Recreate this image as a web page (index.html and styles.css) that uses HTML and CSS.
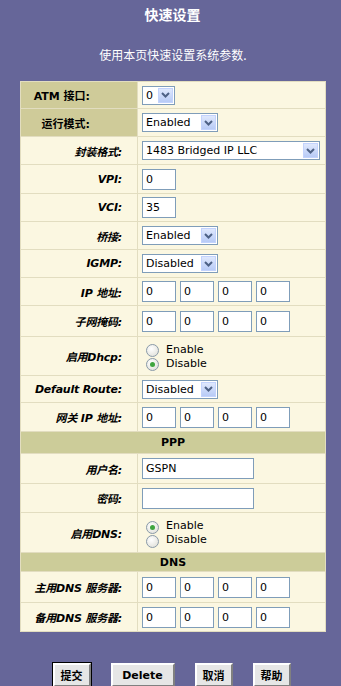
FILE: index.html
```html
<!DOCTYPE html>
<html lang="zh-CN">
<head>
    <meta charset="UTF-8">
    <meta name="viewport" content="width=device-width, initial-scale=1.0">
    <title>快速设置</title>
    <link rel="stylesheet" href="styles.css">
</head>
<body>
    <h1 class="title">快速设置</h1>
    <p class="intro">使用本页快速设置系统参数.</p>

    <table class="setup">
        <colgroup>
            <col class="col-label">
            <col class="col-value">
        </colgroup>
        <tr class="r27">
            <td class="label top">ATM 接口:</td>
            <td><span class="sel w32"><span class="val">0</span><span class="arrow"><svg width="9" height="6" viewBox="0 0 9 6"><path d="M1 1l3.5 3.5L8 1" fill="none" stroke="#4d6185" stroke-width="2"/></svg></span></span></td>
        </tr>
        <tr class="r28">
            <td class="label top">运行模式:</td>
            <td><span class="sel w75"><span class="val">Enabled</span><span class="arrow"><svg width="9" height="6" viewBox="0 0 9 6"><path d="M1 1l3.5 3.5L8 1" fill="none" stroke="#4d6185" stroke-width="2"/></svg></span></span></td>
        </tr>
        <tr class="r28">
            <td class="label">封装格式:</td>
            <td><span class="sel w177"><span class="val">1483 Bridged IP LLC</span><span class="arrow"><svg width="9" height="6" viewBox="0 0 9 6"><path d="M1 1l3.5 3.5L8 1" fill="none" stroke="#4d6185" stroke-width="2"/></svg></span></span></td>
        </tr>
        <tr class="r29">
            <td class="label">VPI:</td>
            <td><input class="box" type="text" value="0"></td>
        </tr>
        <tr class="r28">
            <td class="label">VCI:</td>
            <td><input class="box" type="text" value="35"></td>
        </tr>
        <tr class="r28">
            <td class="label">桥接:</td>
            <td><span class="sel w75"><span class="val">Enabled</span><span class="arrow"><svg width="9" height="6" viewBox="0 0 9 6"><path d="M1 1l3.5 3.5L8 1" fill="none" stroke="#4d6185" stroke-width="2"/></svg></span></span></td>
        </tr>
        <tr class="r28">
            <td class="label">IGMP:</td>
            <td><span class="sel w75"><span class="val">Disabled</span><span class="arrow"><svg width="9" height="6" viewBox="0 0 9 6"><path d="M1 1l3.5 3.5L8 1" fill="none" stroke="#4d6185" stroke-width="2"/></svg></span></span></td>
        </tr>
        <tr class="r28">
            <td class="label">IP 地址:</td>
            <td><div class="ip"><input class="box" value="0"><input class="box" value="0"><input class="box" value="0"><input class="box" value="0"></div></td>
        </tr>
        <tr class="r31">
            <td class="label">子网掩码:</td>
            <td><div class="ip"><input class="box" value="0"><input class="box" value="0"><input class="box" value="0"><input class="box" value="0"></div></td>
        </tr>
        <tr class="r39">
            <td class="label">启用Dhcp:</td>
            <td>
                <label class="radio"><span class="dot"></span>Enable</label>
                <label class="radio"><span class="dot on"></span>Disable</label>
            </td>
        </tr>
        <tr class="r27">
            <td class="label">Default Route:</td>
            <td><span class="sel w75"><span class="val">Disabled</span><span class="arrow"><svg width="9" height="6" viewBox="0 0 9 6"><path d="M1 1l3.5 3.5L8 1" fill="none" stroke="#4d6185" stroke-width="2"/></svg></span></span></td>
        </tr>
        <tr class="r29">
            <td class="label">网关 IP 地址:</td>
            <td><div class="ip"><input class="box" value="0"><input class="box" value="0"><input class="box" value="0"><input class="box" value="0"></div></td>
        </tr>
        <tr class="head r22">
            <td colspan="2">PPP</td>
        </tr>
        <tr class="r30">
            <td class="label">用户名:</td>
            <td><input class="box wide" type="text" value="GSPN"></td>
        </tr>
        <tr class="r29">
            <td class="label">密码:</td>
            <td><input class="box wide" type="password" value=""></td>
        </tr>
        <tr class="r40">
            <td class="label">启用DNS:</td>
            <td>
                <label class="radio"><span class="dot on"></span>Enable</label>
                <label class="radio"><span class="dot"></span>Disable</label>
            </td>
        </tr>
        <tr class="head r19">
            <td colspan="2">DNS</td>
        </tr>
        <tr class="r31">
            <td class="label">主用DNS 服务器:</td>
            <td><div class="ip"><input class="box" value="0"><input class="box" value="0"><input class="box" value="0"><input class="box" value="0"></div></td>
        </tr>
        <tr class="r29">
            <td class="label">备用DNS 服务器:</td>
            <td><div class="ip"><input class="box" value="0"><input class="box" value="0"><input class="box" value="0"><input class="box" value="0"></div></td>
        </tr>
    </table>

    <div class="buttons">
        <button class="btn default">提交</button>
        <button class="btn wide-btn">Delete</button>
        <button class="btn">取消</button>
        <button class="btn">帮助</button>
    </div>
</body>
</html>
```

FILE: styles.css
```css
body {
    margin: 0;
    background-color: #666699;
    font-family: "DejaVu Sans", "Noto Sans CJK SC", sans-serif;
    color: #000;
}
.title {
    margin: 0;
    padding-top: 4px;
    height: 22px;
    font-size: 14px;
    font-weight: bold;
    color: #fff;
    text-align: center;
    padding-left: 4px;
}
.intro {
    margin: 20px 0 0;
    height: 35px;
    font-family: "Noto Sans CJK SC", sans-serif;
    font-size: 12px;
    color: #fff;
    text-align: center;
    padding-left: 5px;
}
.setup {
    margin: 0 0 0 20px;
    width: 305px;
    table-layout: fixed;
    border-collapse: collapse;
    background-color: #fbf7e1;
    border: 1px solid #eeecdc;
}
.col-label {
    width: 117px;
}
.col-value {
    width: 188px;
}
.setup td {
    border: 1px solid #e2ddc0;
    padding: 0 0 0 4px;
    font-size: 11px;
    vertical-align: middle;
}
.setup td.label {
    padding: 0 15px 0 0;
    text-align: right;
    font-weight: bold;
    font-style: italic;
    white-space: nowrap;
    letter-spacing: -0.2px;
}
.setup td.label.top {
    background-color: #cfcb99;
    font-style: normal;
    letter-spacing: 0;
    padding-right: 47px;
}
.setup tr.head td {
    background-color: #cccc99;
    text-align: center;
    font-weight: bold;
    padding: 0;
}
.r19 { height: 19px; }
.r22 { height: 22px; }
.r27 { height: 27px; }
.r28 { height: 28px; }
.r29 { height: 29px; }
.r30 { height: 30px; }
.r31 { height: 31px; }
.r39 { height: 39px; }
.r40 { height: 40px; }

.sel {
    display: inline-flex;
    align-items: center;
    justify-content: space-between;
    height: 19px;
    box-sizing: border-box;
    border: 1px solid #7f9db9;
    background-color: #fff;
    font-family: "DejaVu Sans", sans-serif;
    font-size: 11px;
    padding: 1px 1px 1px 3px;
    vertical-align: middle;
}
.sel .arrow {
    display: flex;
    align-items: center;
    justify-content: center;
    width: 15px;
    height: 15px;
    background: linear-gradient(#dfe8fd, #b8cbf6);
    border: 1px solid #c3d3fd;
    box-sizing: border-box;
}
.w32 { width: 33px; }
.w75 { width: 76px; }
.w177 { width: 178px; }

.box {
    width: 34px;
    height: 21px;
    box-sizing: border-box;
    border: 1px solid #7f9db9;
    background-color: #fff;
    padding: 0 3px;
    margin: 0;
    font-family: "DejaVu Sans", sans-serif;
    font-size: 11px;
    vertical-align: middle;
}
.box.wide {
    width: 112px;
}
.ip {
    display: flex;
    gap: 4px;
}

.radio {
    display: flex;
    align-items: center;
    height: 14px;
    padding-left: 4px;
    font-family: "DejaVu Sans", sans-serif;
    font-size: 11px;
}
.dot {
    width: 11px;
    height: 11px;
    border: 1px solid #8a9aa8;
    border-radius: 50%;
    background: radial-gradient(circle at 40% 35%, #fff, #dcdcd4);
    margin-right: 7px;
    margin-top: 3px;
    position: relative;
    flex-shrink: 0;
}
.dot.on::after {
    content: "";
    position: absolute;
    left: 3px;
    top: 3px;
    width: 5px;
    height: 5px;
    border-radius: 50%;
    background-color: #3fa53f;
}

.buttons {
    display: flex;
    justify-content: center;
    gap: 20px;
    margin-top: 31px;
    padding-left: 2px;
}
.btn {
    height: 24px;
    min-width: 38px;
    padding: 0 6px;
    background-color: #e6e6e6;
    border: 2px solid;
    border-color: #fff #808080 #808080 #fff;
    font-family: "DejaVu Sans", "Noto Sans CJK SC", sans-serif;
    font-size: 11px;
    font-weight: bold;
    color: #000;
}
.btn.default {
    outline: 1px solid #000;
}
.btn.wide-btn {
    width: 64px;
}
```
